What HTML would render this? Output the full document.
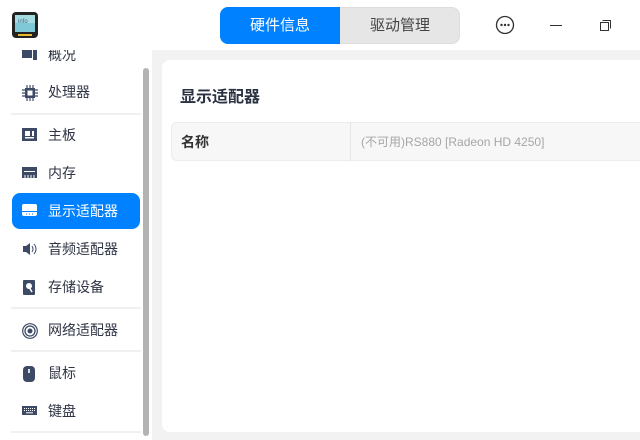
<!DOCTYPE html>
<html><head><meta charset="utf-8"><style>
*{margin:0;padding:0;box-sizing:border-box}
body{width:640px;height:440px;overflow:hidden;background:#f2f2f2;font-family:"Liberation Sans","Noto Sans CJK SC",sans-serif;position:relative}
.hdr{position:absolute;left:0;top:0;width:640px;height:50px;background:#fff}
.side{position:absolute;left:0;top:50px;width:152px;height:390px;background:#fff;overflow:hidden}
.item{position:absolute;left:12px;width:128px;height:36px;font-size:14px;color:#2f3544;line-height:37px;padding-left:36px}
.item svg{position:absolute;left:10px;top:11px}
.sel{background:#0081ff;color:#fff;border-radius:8px}
.div{position:absolute;left:11px;width:130px;height:2px;background:#f0f0f0}
.sb{position:absolute;left:143px;top:68px;width:6px;height:368px;background:#b3b3b3;border-radius:3px}
.card{position:absolute;left:162px;top:60px;width:490px;height:372px;background:#fff;border-radius:8px}
</style></head><body>
<div class="hdr">
<svg style="position:absolute;left:12px;top:12px" width="26" height="26" viewBox="0 0 26 26"><rect x="0" y="0" width="26" height="26" rx="4" fill="#222"/><rect x="3" y="3" width="20" height="17" fill="#7ec8d8"/><rect x="3" y="3" width="20" height="8" fill="#a6dbe0"/><text x="6" y="11" font-size="6" fill="#468" font-family="Liberation Sans">info</text><rect x="6" y="22" width="14" height="2" fill="#e8b830"/></svg>
<div style="position:absolute;left:220px;top:7px;width:240px;height:37px;border-radius:8px;background:#e6e6e6;border:1px solid #ddd"></div>
<div style="position:absolute;left:220px;top:7px;width:120px;height:37px;border-radius:8px 0 0 8px;background:#0081ff;color:#fff;font-size:15px;line-height:37px;text-align:center">硬件信息</div>
<div style="position:absolute;left:340px;top:7px;width:120px;height:37px;color:#444;font-size:15px;line-height:37px;text-align:center">驱动管理</div>
<svg style="position:absolute;left:495px;top:15px" width="20" height="20" viewBox="0 0 20 20"><circle cx="10" cy="10" r="8.5" fill="none" stroke="#333" stroke-width="1.3"/><circle cx="6.5" cy="10" r="1.2" fill="#333"/><circle cx="10" cy="10" r="1.2" fill="#333"/><circle cx="13.5" cy="10" r="1.2" fill="#333"/></svg>
<div style="position:absolute;left:550px;top:25px;width:12px;height:1px;background:#333"></div>
<svg style="position:absolute;left:600px;top:20px" width="11" height="11" viewBox="0 0 11 11"><rect x="0.5" y="2.5" width="8" height="8" fill="none" stroke="#333"/><path d="M2.5 0.5H10.5V8.5" fill="none" stroke="#333"/></svg>
</div>
<div class="side">
<div class="item" style="top:-13px"><svg width="16" height="14"><rect x="0" y="2" width="10" height="8" fill="#3d4a66"/><rect x="11" y="0" width="4" height="12" fill="#3d4a66"/></svg>概况</div>
<div class="item" style="top:24px"><svg width="16" height="16" viewBox="0 0 16 16"><rect x="3" y="3" width="10" height="10" fill="#3d4a66"/><rect x="5.5" y="5.5" width="5" height="5" fill="#fff"/><path d="M5 0v3M8 0v3M11 0v3M5 13v3M8 13v3M11 13v3M0 5h3M0 8h3M0 11h3M13 5h3M13 8h3M13 11h3" stroke="#3d4a66" stroke-width="1.2"/></svg>处理器</div>
<div class="div" style="top:63px"></div>
<div class="item" style="top:67px"><svg width="16" height="14"><rect x="0" y="0" width="15" height="13" fill="#3d4a66"/><rect x="3" y="3" width="5" height="5" fill="#fff"/><rect x="10" y="3" width="2" height="5" fill="#fff"/><rect x="3" y="9" width="9" height="1.5" fill="#fff"/></svg>主板</div>
<div class="item" style="top:105px"><svg width="16" height="14"><rect x="0" y="1" width="15" height="11" fill="#3d4a66"/><rect x="2" y="5" width="11" height="1" fill="#fff"/><path d="M3 9v3M6 9v3M9 9v3M12 9v3" stroke="#fff"/></svg>内存</div>
<div class="item sel" style="top:143px"><svg width="16" height="14"><rect x="0" y="0" width="15" height="12" rx="2" fill="#fff"/><rect x="0" y="7" width="15" height="1" fill="#0081ff"/><path d="M4 10h1M7 10h1M10 10h1" stroke="#0081ff"/></svg>显示适配器</div>
<div class="item" style="top:181px"><svg width="16" height="14"><path d="M1 4h3l4-3v12l-4-3H1z" fill="#3d4a66"/><path d="M10 4q2 3 0 6M12 2q4 5 0 10" stroke="#3d4a66" fill="none"/></svg>音频适配器</div>
<div class="item" style="top:219px"><svg width="16" height="15"><rect x="1" y="0" width="12" height="15" rx="1" fill="#3d4a66"/><circle cx="7" cy="6" r="3" fill="#fff"/><path d="M7 7l3 5" stroke="#fff" stroke-width="1.5"/></svg>存储设备</div>
<div class="div" style="top:257px"></div>
<div class="item" style="top:262px"><svg width="16" height="16" viewBox="0 0 16 16"><circle cx="8" cy="8" r="2.5" fill="#3d4a66"/><circle cx="8" cy="8" r="5" fill="none" stroke="#3d4a66" stroke-width="1.3"/><circle cx="8" cy="8" r="7.3" fill="none" stroke="#3d4a66" stroke-width="1.2"/></svg>网络适配器</div>
<div class="div" style="top:300px"></div>
<div class="item" style="top:305px"><svg width="16" height="16"><rect x="1" y="0" width="12" height="16" rx="4" fill="#3d4a66"/><rect x="6.2" y="3" width="1.6" height="4" fill="#fff"/></svg>鼠标</div>
<div class="item" style="top:343px"><svg width="16" height="14"><rect x="0" y="2" width="15" height="9" fill="#3d4a66"/><path d="M2 4.5h11M2 6.5h11" stroke="#fff" stroke-dasharray="1 1"/><path d="M4 8.8h7" stroke="#fff"/></svg>键盘</div>
<div class="div" style="top:381px"></div>
</div>
<div class="sb"></div>
<div class="card">
<div style="position:absolute;left:18px;top:23px;font-size:16px;font-weight:bold;color:#2a3142">显示适配器</div>
<div style="position:absolute;left:9px;top:62px;width:490px;height:39px;border:1px solid #ececec;border-radius:6px;background:#f7f7f7">
<div style="position:absolute;left:9px;top:0;line-height:38px;font-size:14px;font-weight:bold;color:#333">名称</div>
<div style="position:absolute;left:178px;top:0;width:1px;height:38px;background:#e6e6e6"></div>
<div style="position:absolute;left:189px;top:0;line-height:38px;font-size:12px;color:#a6a6a6">(不可用)RS880 [Radeon HD 4250]</div>
</div>
</div>
</body></html>
